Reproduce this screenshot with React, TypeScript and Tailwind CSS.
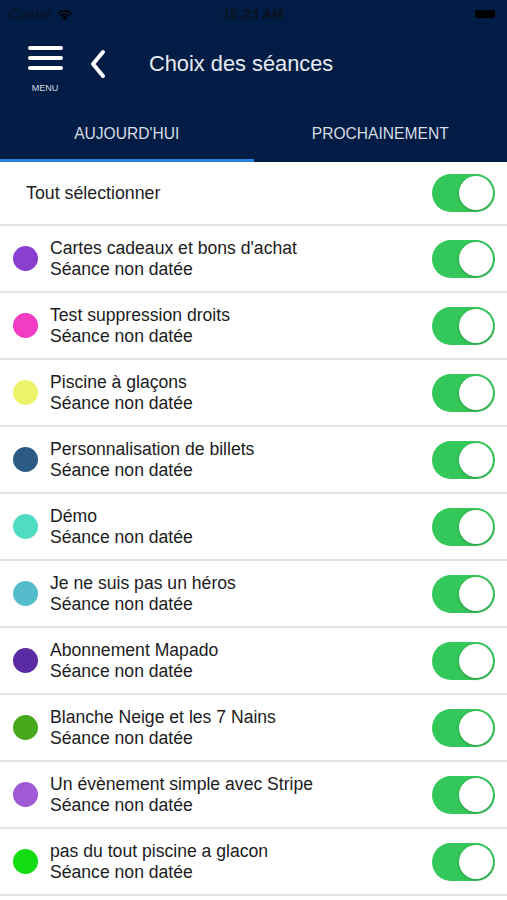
const rows = [
  { title: "Cartes cadeaux et bons d'achat", color: "#8b3fd0" },
  { title: "Test suppression droits", color: "#f23cc4" },
  { title: "Piscine à glaçons", color: "#eef26b" },
  { title: "Personnalisation de billets", color: "#2b5a85" },
  { title: "Démo", color: "#50dcc2" },
  { title: "Je ne suis pas un héros", color: "#55bccb" },
  { title: "Abonnement Mapado", color: "#5a2ba3" },
  { title: "Blanche Neige et les 7 Nains", color: "#47a81c" },
  { title: "Un évènement simple avec Stripe", color: "#a15ad6" },
  { title: "pas du tout piscine a glacon", color: "#12dc12" },
]

function Toggle() {
  return (
    <div className="w-[63px] h-[38px] rounded-full bg-[#34c759] relative shrink-0">
      <div className="absolute right-[2px] top-[2px] w-[34px] h-[34px] rounded-full bg-white shadow-[0_1px_3px_rgba(0,0,0,0.25)]" />
    </div>
  )
}

export default function App() {
  return (
    <div className="w-[507px] h-[900px] bg-white overflow-hidden font-['Liberation_Sans',Arial,sans-serif]">
      <header className="bg-[#011d45]">
        {/* status bar */}
        <div className="h-[28px] flex items-center justify-between px-[9px] text-[14px] text-black">
          <div className="flex items-center gap-1 w-[120px]">
            <span className="text-[#0b1220]">Carrier</span>
            <svg width="17" height="13" viewBox="0 0 17 13">
              <path d="M8.5 12.5 L5.8 9.6 A4 4 0 0 1 11.2 9.6 Z" fill="#000" />
              <path d="M3.6 7.4 A7 7 0 0 1 13.4 7.4 L12.2 8.6 A5.3 5.3 0 0 0 4.8 8.6 Z" fill="#000" />
              <path d="M1.2 5 A10.4 10.4 0 0 1 15.8 5 L14.6 6.2 A8.7 8.7 0 0 0 2.4 6.2 Z" fill="#000" />
            </svg>
          </div>
          <span className="font-bold text-[#0b1220]">10:23 AM</span>
          <div className="w-[120px] flex justify-end pr-[3px]">
            <div className="w-[20px] h-[8px] rounded-[2px] bg-black" />
          </div>
        </div>

        {/* nav bar */}
        <div className="h-[80px] flex items-start pt-[17px]">
          <div className="w-[90px] flex flex-col items-center">
            <div className="flex flex-col gap-[6px] pt-[1px] ml-[1px]">
              <div className="w-[35px] h-[4px] rounded bg-white" />
              <div className="w-[35px] h-[4px] rounded bg-white" />
              <div className="w-[35px] h-[4px] rounded bg-white" />
            </div>
            <span className="mt-[14px] text-[9px] leading-none text-[#d7dbe2]">MENU</span>
          </div>
          <svg width="20" height="30" viewBox="0 0 20 30" className="-ml-[2px] mt-[4px]">
            <path d="M15 3 L5 15 L15 27" stroke="#fff" strokeWidth="4" fill="none" strokeLinecap="round" strokeLinejoin="round" />
          </svg>
          <h1 className="ml-[41px] mt-[3px] text-[21.8px] text-[#e8ebf0]">Choix des séances</h1>
        </div>

        {/* tabs */}
        <div className="flex h-[54px]">
          <div className="flex-1 flex flex-col">
            <div className="flex-1 flex items-center justify-center text-[15.6px] text-[#d8dce3]">AUJOURD'HUI</div>
            <div className="h-[3px] bg-[#2a7fe3]" />
          </div>
          <div className="flex-1 flex flex-col">
            <div className="flex-1 flex items-center justify-center text-[15.6px] text-[#d8dce3]">PROCHAINEMENT</div>
            <div className="h-[3px]" />
          </div>
        </div>
      </header>

      <ul>
        <li className="h-[64px] flex items-center justify-between pl-[26px] pr-[12px] border-b-2 border-[#e4e4e6]">
          <span className="text-[17.8px] text-[#1c1c1e]">Tout sélectionner</span>
          <Toggle />
        </li>
        {rows.map((r, i) => (
          <li key={i} className="h-[67px] flex items-center pl-[13px] pr-[12px] border-b-2 border-[#e4e4e6]">
            <div className="w-[25px] h-[25px] rounded-full shrink-0" style={{ backgroundColor: r.color }} />
            <div className="ml-[12px] flex-1 leading-[21px] text-[17.6px] text-[#1c1c1e]">
              <div>{r.title}</div>
              <div>Séance non datée</div>
            </div>
            <Toggle />
          </li>
        ))}
      </ul>
    </div>
  )
}
